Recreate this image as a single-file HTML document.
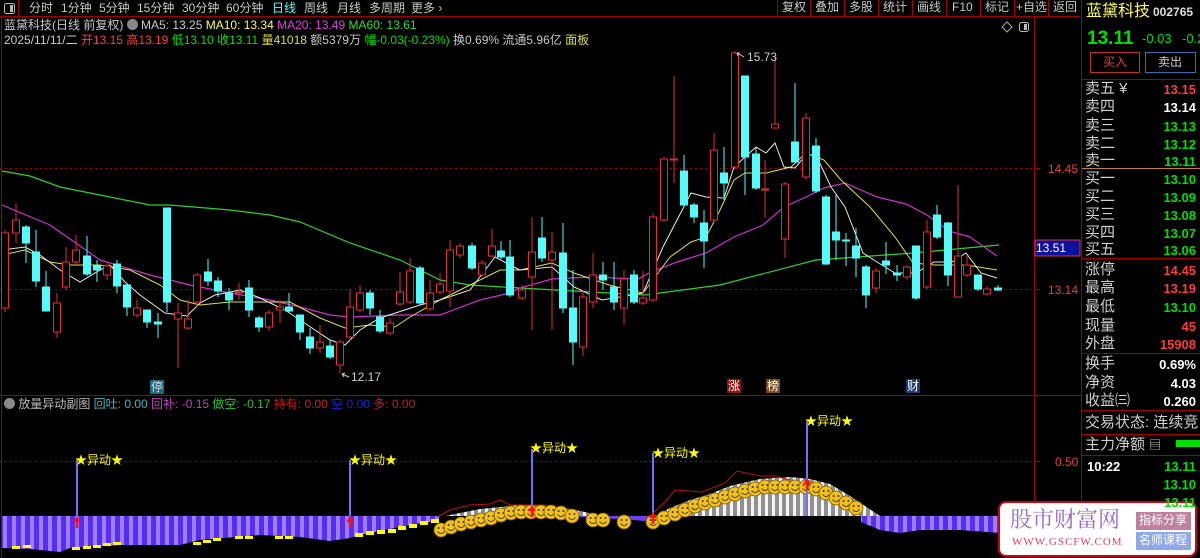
<!DOCTYPE html>
<html><head><meta charset="utf-8">
<style>
*{margin:0;padding:0;box-sizing:border-box}
body{width:1200px;height:558px;background:#000;overflow:hidden;position:relative;font-family:"Liberation Sans","Noto Sans CJK SC",sans-serif;color:#c8c8c8}
.a{position:absolute;white-space:nowrap;line-height:1}
.tb{font-size:12px;color:#c8c8c8;top:2px}
.bt{font-size:12px;color:#c8c8c8;top:1px}
.rp{font-size:15px;color:#d0d0d0}
.rv{font-size:13px;font-weight:bold;text-align:right;right:4px}
.g{color:#00e000}.r{color:#ff3c3c}.w{color:#fff}
</style></head><body>
<svg class="a" style="left:0;top:0" width="1200" height="558">
<defs>
<pattern id="pp" width="9" height="10" patternUnits="userSpaceOnUse"><rect width="9" height="10" fill="#5a2cf0"/><rect x="3" width="4" height="10" fill="#9a80ff"/></pattern>
<pattern id="wp" width="7" height="10" patternUnits="userSpaceOnUse"><rect width="7" height="10" fill="#909090"/><rect x="2" width="3" height="10" fill="#f4f4f4"/></pattern>
<g id="sm"><circle r="7" fill="#f2c21c" stroke="#7a5a00" stroke-width="0.8"/><circle cx="-2.4" cy="-2" r="1" fill="#402800"/><circle cx="2.4" cy="-2" r="1" fill="#402800"/><path d="M-3.5 1.5Q0 5.5 3.5 1.5" stroke="#402800" fill="none" stroke-width="0.9"/></g>
<g id="ar"><path d="M0 -6L-4 0H-1.3V6H1.3V0H4Z" fill="#ff1010"/></g>
</defs>
<!-- frame lines -->
<line x1="0" y1="16.5" x2="1080" y2="16.5" stroke="#a00000"/>
<line x1="1.5" y1="17" x2="1.5" y2="558" stroke="#a00000"/>
<line x1="1034.5" y1="17" x2="1034.5" y2="558" stroke="#a00000"/>
<line x1="1081.5" y1="0" x2="1081.5" y2="558" stroke="#a00000"/>
<line x1="0" y1="395.5" x2="1081" y2="395.5" stroke="#a00000"/>
<line x1="0" y1="168.5" x2="1034" y2="168.5" stroke="#a00000" stroke-dasharray="2 3"/>
<line x1="0" y1="289.5" x2="1034" y2="289.5" stroke="#a00000" stroke-dasharray="2 3"/>
<line x1="0" y1="461.5" x2="1034" y2="461.5" stroke="#a00000" stroke-dasharray="2 3"/>
<line x1="1034" y1="168.5" x2="1040" y2="168.5" stroke="#a00000"/>
<line x1="1034" y1="289.5" x2="1040" y2="289.5" stroke="#a00000"/>
<line x1="1034" y1="461.5" x2="1040" y2="461.5" stroke="#a00000"/>
<!-- toolbar separators -->
<g stroke="#a00000"><line x1="18.5" y1="0" x2="18.5" y2="16"/><line x1="777.5" y1="0" x2="777.5" y2="16"/><line x1="810.5" y1="0" x2="810.5" y2="16"/><line x1="844.5" y1="0" x2="844.5" y2="16"/><line x1="878.5" y1="0" x2="878.5" y2="16"/><line x1="912.5" y1="0" x2="912.5" y2="16"/><line x1="946.5" y1="0" x2="946.5" y2="16"/><line x1="980.5" y1="0" x2="980.5" y2="16"/><line x1="1014.5" y1="0" x2="1014.5" y2="16"/><line x1="1048.5" y1="0" x2="1048.5" y2="16"/></g>
<rect x="4.5" y="3.5" width="10" height="10" rx="2" fill="none" stroke="#bbb"/><rect x="10" y="5" width="3" height="7" fill="#bbb"/>
<path d="M1007 22l5 5-5 5-5-5z" fill="none" stroke="#aaa"/>
<rect x="1019.5" y="22.5" width="9" height="9" rx="2" fill="none" stroke="#bbb"/><rect x="1024" y="24" width="3" height="6" fill="#bbb"/>
<!-- MA lines -->
<polyline fill="none" stroke="#2ed02e" stroke-width="1.2" points="2,171 30,176 60,187 100,195 150,205 170,205 230,210 270,215 300,222 350,243 400,260 420,270 440,280 470,285 520,288 591,292 645,295 720,285 816,260 913,253 999,245"/>
<polyline fill="none" stroke="#d030d0" stroke-width="1.2" points="2,205 50,225 100,260 150,275 190,285 230,293 270,300 300,307 330,315 350,317 400,315 440,315 480,300 510,293 520,288 552,279 591,277 638,279 649,273 677,262 706,253 734,237 763,225 784,207 806,197 824,188 845,183 877,197 906,204 927,215 949,231 970,237 997,256"/>
<polyline fill="none" stroke="#e0e040" stroke-width="1" points="2,255 25,250 50,262 70,265 100,265 130,270 160,285 180,300 200,305 230,302 260,302 290,302 320,318 345,328 370,325 395,327 410,317 440,300 470,285 500,270 520,270 552,263 574,273 609,285 643,293 670,257 691,242 706,237 720,210 734,180 745,173 766,173 791,167 806,153 824,160 841,180 870,207 895,237 913,263 934,265 966,265 997,270"/>
<polyline fill="none" stroke="#e8e8e8" stroke-width="1" points="2,250 25,247 40,255 60,270 80,282 100,270 110,265 125,282 140,295 165,313 187,316 200,303 215,295 240,290 260,298 285,310 300,320 330,340 345,345 360,330 380,318 420,305 440,300 470,290 495,257 510,265 520,270 552,267 574,287 602,300 643,293 663,247 691,193 706,197 724,198 734,167 756,147 766,153 775,143 784,167 795,168 806,155 816,155 831,187 845,207 863,253 877,262 895,273 916,273 934,262 952,262 966,253 981,273 997,278"/>
<!-- candles -->
<g id="c" stroke-width="1">
<g stroke="#e03030" fill="#000">
<line x1="5" y1="230" x2="5" y2="312"/><rect x="1.5" y="233" width="7" height="75"/>
<line x1="16" y1="203" x2="16" y2="243"/><rect x="12.5" y="220" width="7" height="13"/>
<line x1="57" y1="293" x2="57" y2="338"/><rect x="53.5" y="303" width="7" height="29"/>
<line x1="66" y1="247" x2="66" y2="290"/><rect x="62.5" y="262" width="7" height="25"/>
<line x1="76" y1="235" x2="76" y2="265"/><rect x="72.5" y="250" width="7" height="12"/>
<line x1="107" y1="262" x2="107" y2="280"/><rect x="103.5" y="266" width="7" height="9"/>
<line x1="137" y1="300" x2="137" y2="318"/><rect x="133.5" y="308" width="7" height="7"/>
<line x1="178" y1="303" x2="178" y2="368"/><rect x="174.5" y="313" width="7" height="6"/>
<line x1="188" y1="300" x2="188" y2="330"/><rect x="184.5" y="319" width="7" height="9"/>
<line x1="197" y1="273" x2="197" y2="307"/><rect x="193.5" y="275" width="7" height="27"/>
<line x1="239" y1="283" x2="239" y2="300"/><rect x="235.5" y="292" width="7" height="1"/>
<line x1="269" y1="310" x2="269" y2="331"/><rect x="265.5" y="313" width="7" height="14"/>
<line x1="280" y1="300" x2="280" y2="323"/><rect x="276.5" y="307" width="7" height="3"/>
<line x1="320" y1="325" x2="320" y2="353"/><rect x="316.5" y="342" width="7" height="6"/>
<line x1="340" y1="340" x2="340" y2="373"/><rect x="336.5" y="342" width="7" height="23"/>
<line x1="350" y1="289" x2="350" y2="340"/><rect x="346.5" y="307" width="7" height="30"/>
<line x1="360" y1="285" x2="360" y2="312"/><rect x="356.5" y="293" width="7" height="17"/>
<line x1="390" y1="318" x2="390" y2="335"/><rect x="386.5" y="323" width="7" height="10"/>
<line x1="400" y1="272" x2="400" y2="306"/><rect x="396.5" y="292" width="7" height="12"/>
<line x1="410" y1="258" x2="410" y2="304"/><rect x="406.5" y="271" width="7" height="31"/>
<line x1="430" y1="280" x2="430" y2="311"/><rect x="426.5" y="293" width="7" height="16"/>
<line x1="440" y1="273" x2="440" y2="294"/><rect x="436.5" y="284" width="7" height="8"/>
<line x1="450" y1="240" x2="450" y2="307"/><rect x="446.5" y="250" width="7" height="41"/>
<line x1="460" y1="243" x2="460" y2="258"/><rect x="456.5" y="246" width="7" height="9"/>
<line x1="482" y1="260" x2="482" y2="277"/><rect x="478.5" y="263" width="7" height="12"/>
<line x1="492" y1="229" x2="492" y2="258"/><rect x="488.5" y="246" width="7" height="10"/>
<line x1="522" y1="285" x2="522" y2="300"/><rect x="518.5" y="290" width="7" height="8"/>
<line x1="532" y1="217" x2="532" y2="330"/><rect x="528.5" y="252" width="7" height="25"/>
<line x1="552" y1="232" x2="552" y2="330"/><rect x="548.5" y="252" width="7" height="8"/>
<line x1="583" y1="290" x2="583" y2="356"/><rect x="579.5" y="297" width="7" height="50"/>
<line x1="593" y1="253" x2="593" y2="308"/><rect x="589.5" y="275" width="7" height="27"/>
<line x1="624" y1="270" x2="624" y2="325"/><rect x="620.5" y="279" width="7" height="29"/>
<line x1="643" y1="271" x2="643" y2="305"/><rect x="639.5" y="298" width="7" height="5"/>
<line x1="653" y1="213" x2="653" y2="302"/><rect x="649.5" y="217" width="7" height="83"/>
<line x1="664" y1="157" x2="664" y2="222"/><rect x="660.5" y="159" width="7" height="61"/>
<line x1="674" y1="76" x2="674" y2="183"/><rect x="670.5" y="159" width="7" height="1"/>
<line x1="714" y1="133" x2="714" y2="222"/><rect x="710.5" y="150" width="7" height="70"/>
<line x1="735" y1="51" x2="735" y2="169"/><rect x="731.5" y="53" width="7" height="114"/>
<line x1="765" y1="160" x2="765" y2="218"/><rect x="761.5" y="189" width="7" height="1"/>
<line x1="775" y1="57" x2="775" y2="128"/><rect x="771.5" y="124" width="7" height="4"/>
<line x1="785" y1="182" x2="785" y2="258"/><rect x="781.5" y="184" width="7" height="55"/>
<line x1="806" y1="113" x2="806" y2="180"/><rect x="802.5" y="118" width="7" height="59"/>
<line x1="876" y1="268" x2="876" y2="293"/><rect x="872.5" y="271" width="7" height="17"/>
<line x1="907" y1="265" x2="907" y2="280"/><rect x="903.5" y="267" width="7" height="10"/>
<line x1="927" y1="220" x2="927" y2="289"/><rect x="923.5" y="232" width="7" height="55"/>
<line x1="958" y1="185" x2="958" y2="298"/><rect x="954.5" y="256" width="7" height="41"/>
<line x1="967" y1="256" x2="967" y2="277"/><rect x="963.5" y="265" width="7" height="10"/>
<line x1="987" y1="286" x2="987" y2="295"/><rect x="983.5" y="289" width="7" height="5"/>
</g>
<g stroke="#54fcfc" fill="#54fcfc">
<line x1="26" y1="225" x2="26" y2="263"/><rect x="22.5" y="227" width="7" height="16"/>
<line x1="36" y1="230" x2="36" y2="287"/><rect x="32.5" y="252" width="7" height="29"/>
<line x1="46" y1="271" x2="46" y2="311"/><rect x="42.5" y="287" width="7" height="24"/>
<line x1="87" y1="236" x2="87" y2="276"/><rect x="83.5" y="256" width="7" height="18"/>
<line x1="97" y1="260" x2="97" y2="282"/><rect x="93.5" y="266" width="7" height="4"/>
<line x1="117" y1="260" x2="117" y2="293"/><rect x="113.5" y="264" width="7" height="22"/>
<line x1="127" y1="283" x2="127" y2="316"/><rect x="123.5" y="285" width="7" height="22"/>
<line x1="147" y1="310" x2="147" y2="328"/><rect x="143.5" y="310" width="7" height="12"/>
<line x1="158" y1="313" x2="158" y2="338"/><rect x="154.5" y="322" width="7" height="2"/>
<line x1="167" y1="208" x2="167" y2="312"/><rect x="163.5" y="208" width="7" height="94"/>
<line x1="208" y1="259" x2="208" y2="286"/><rect x="204.5" y="272" width="7" height="9"/>
<line x1="218" y1="277" x2="218" y2="297"/><rect x="214.5" y="281" width="7" height="10"/>
<line x1="229" y1="288" x2="229" y2="310"/><rect x="225.5" y="293" width="7" height="7"/>
<line x1="249" y1="280" x2="249" y2="317"/><rect x="245.5" y="288" width="7" height="22"/>
<line x1="259" y1="316" x2="259" y2="332"/><rect x="255.5" y="318" width="7" height="9"/>
<line x1="289" y1="293" x2="289" y2="312"/><rect x="285.5" y="307" width="7" height="4"/>
<line x1="300" y1="315" x2="300" y2="340"/><rect x="296.5" y="315" width="7" height="17"/>
<line x1="310" y1="328" x2="310" y2="354"/><rect x="306.5" y="337" width="7" height="11"/>
<line x1="330" y1="340" x2="330" y2="359"/><rect x="326.5" y="346" width="7" height="11"/>
<line x1="370" y1="290" x2="370" y2="315"/><rect x="366.5" y="293" width="7" height="15"/>
<line x1="380" y1="310" x2="380" y2="333"/><rect x="376.5" y="317" width="7" height="14"/>
<line x1="420" y1="266" x2="420" y2="305"/><rect x="416.5" y="268" width="7" height="35"/>
<line x1="472" y1="243" x2="472" y2="270"/><rect x="468.5" y="246" width="7" height="22"/>
<line x1="501" y1="241" x2="501" y2="259"/><rect x="497.5" y="251" width="7" height="6"/>
<line x1="510" y1="240" x2="510" y2="297"/><rect x="506.5" y="257" width="7" height="38"/>
<line x1="542" y1="217" x2="542" y2="262"/><rect x="538.5" y="238" width="7" height="20"/>
<line x1="563" y1="223" x2="563" y2="313"/><rect x="559.5" y="253" width="7" height="55"/>
<line x1="573" y1="270" x2="573" y2="365"/><rect x="569.5" y="308" width="7" height="34"/>
<line x1="603" y1="262" x2="603" y2="290"/><rect x="599.5" y="275" width="7" height="5"/>
<line x1="614" y1="262" x2="614" y2="310"/><rect x="610.5" y="287" width="7" height="15"/>
<line x1="634" y1="270" x2="634" y2="304"/><rect x="630.5" y="275" width="7" height="27"/>
<line x1="684" y1="155" x2="684" y2="207"/><rect x="680.5" y="171" width="7" height="34"/>
<line x1="694" y1="203" x2="694" y2="223"/><rect x="690.5" y="205" width="7" height="12"/>
<line x1="704" y1="210" x2="704" y2="268"/><rect x="700.5" y="223" width="7" height="18"/>
<line x1="724" y1="147" x2="724" y2="200"/><rect x="720.5" y="173" width="7" height="10"/>
<line x1="745" y1="76" x2="745" y2="195"/><rect x="741.5" y="76" width="7" height="81"/>
<line x1="756" y1="147" x2="756" y2="190"/><rect x="752.5" y="154" width="7" height="34"/>
<line x1="795" y1="83" x2="795" y2="164"/><rect x="791.5" y="142" width="7" height="20"/>
<line x1="816" y1="138" x2="816" y2="193"/><rect x="812.5" y="146" width="7" height="45"/>
<line x1="826" y1="195" x2="826" y2="265"/><rect x="822.5" y="197" width="7" height="67"/>
<line x1="836" y1="195" x2="836" y2="260"/><rect x="832.5" y="232" width="7" height="8"/>
<line x1="846" y1="233" x2="846" y2="266"/><rect x="842.5" y="240" width="7" height="1"/>
<line x1="856" y1="228" x2="856" y2="277"/><rect x="852.5" y="246" width="7" height="12"/>
<line x1="866" y1="265" x2="866" y2="308"/><rect x="862.5" y="267" width="7" height="28"/>
<line x1="886" y1="242" x2="886" y2="274"/><rect x="882.5" y="261" width="7" height="4"/>
<line x1="897" y1="265" x2="897" y2="281"/><rect x="893.5" y="273" width="7" height="2"/>
<line x1="916" y1="246" x2="916" y2="300"/><rect x="912.5" y="246" width="7" height="52"/>
<line x1="937" y1="205" x2="937" y2="239"/><rect x="933.5" y="215" width="7" height="22"/>
<line x1="948" y1="222" x2="948" y2="286"/><rect x="944.5" y="223" width="7" height="52"/>
<line x1="978" y1="275" x2="978" y2="291"/><rect x="974.5" y="275" width="7" height="14"/>
<line x1="998" y1="285" x2="998" y2="291"/><rect x="994.5" y="288" width="7" height="2"/>
</g>
</g>
<!-- markers -->
<path d="M744 57l-7-4m0 0l3 0m-3 0l1 3" stroke="#ccc" fill="none"/>
<path d="M349 377l-7-3m0 0l3-1m-3 1l2 3" stroke="#ccc" fill="none"/>
<rect x="150" y="380" width="14" height="14" fill="#1c6a80"/>
<rect x="727" y="379" width="14" height="14" fill="#8a1414"/>
<rect x="766" y="379" width="14" height="14" fill="#7a4a14"/>
<rect x="906" y="379" width="14" height="14" fill="#1c3c70"/>
<rect x="1035" y="240" width="45" height="16" fill="#1010a0" stroke="#e03030"/>
<!-- bottom panel -->
<polygon fill="url(#pp)" points="2,516 440,516 438,520 430,522 415,524 400,527 375,532 360,535 350,538 330,541 300,537 260,535 200,540 180,545 120,545 70,548 60,552 30,549 2,548"/>
<polygon fill="url(#pp)" points="861,516 1034,516 1034,533 1000,533 960,530 920,530 900,533 880,530 861,522"/>
<polygon fill="#6a40f0" points="575,516 650,516 645,521 620,519 590,518"/>
<polygon fill="url(#wp)" points="445,516 480,509 520,505 560,507 585,512 600,516"/>
<polygon fill="url(#wp)" points="655,516 670,508 690,500 710,494 730,486 760,479 790,477 810,479 830,484 850,496 868,508 880,516"/>
<g fill="#ffff00"><rect x="12" y="546" width="8" height="3"/><rect x="23" y="545" width="8" height="3"/><rect x="72" y="547" width="8" height="3"/><rect x="83" y="546" width="8" height="3"/><rect x="93" y="545" width="8" height="3"/><rect x="103" y="543" width="8" height="3"/><rect x="113" y="542" width="8" height="3"/><rect x="193" y="542" width="8" height="3"/><rect x="203" y="540" width="8" height="3"/><rect x="213" y="538" width="8" height="3"/><rect x="235" y="536" width="8" height="3"/><rect x="245" y="536" width="8" height="3"/><rect x="275" y="536" width="8" height="3"/><rect x="285" y="536" width="8" height="3"/><rect x="355" y="533" width="8" height="4"/><rect x="366" y="531" width="8" height="4"/><rect x="377" y="530" width="8" height="4"/><rect x="388" y="529" width="8" height="4"/><rect x="398" y="526" width="8" height="4"/><rect x="409" y="524" width="8" height="4"/><rect x="420" y="521" width="8" height="4"/><rect x="431" y="519" width="8" height="4"/></g>
<polyline fill="none" stroke="#c01010" points="437,517 450,510 470,505 490,504 500,500 510,505 545,505 560,508"/>
<polyline fill="none" stroke="#c01010" points="653,513 665,502 675,490 702,492 725,483 737,471 760,476 775,476 790,480"/>
<g>
<use href="#sm" x="441" y="530"/><use href="#sm" x="451" y="527"/><use href="#sm" x="461" y="524"/><use href="#sm" x="471" y="522"/><use href="#sm" x="481" y="520"/><use href="#sm" x="491" y="518"/><use href="#sm" x="501" y="515"/><use href="#sm" x="511" y="513"/><use href="#sm" x="521" y="512"/><use href="#sm" x="531" y="512"/><use href="#sm" x="541" y="512"/><use href="#sm" x="551" y="512"/><use href="#sm" x="561" y="513"/><use href="#sm" x="572" y="516"/>
<use href="#sm" x="593" y="520"/><use href="#sm" x="603" y="520"/><use href="#sm" x="624" y="522"/>
<use href="#sm" x="653" y="522"/><use href="#sm" x="664" y="518"/><use href="#sm" x="675" y="514"/><use href="#sm" x="685" y="510"/><use href="#sm" x="695" y="506"/><use href="#sm" x="705" y="503"/><use href="#sm" x="715" y="500"/><use href="#sm" x="725" y="497"/><use href="#sm" x="735" y="494"/><use href="#sm" x="745" y="491"/><use href="#sm" x="755" y="489"/><use href="#sm" x="765" y="487"/><use href="#sm" x="775" y="487"/><use href="#sm" x="785" y="487"/><use href="#sm" x="795" y="487"/><use href="#sm" x="806" y="487"/><use href="#sm" x="816" y="489"/><use href="#sm" x="826" y="493"/><use href="#sm" x="836" y="498"/><use href="#sm" x="846" y="503"/><use href="#sm" x="856" y="508"/>
</g>
<g stroke="#7070ff" stroke-width="2"><line x1="77" y1="460" x2="77" y2="516"/><line x1="350" y1="460" x2="350" y2="516"/><line x1="532" y1="449" x2="532" y2="516"/><line x1="653" y1="453" x2="653" y2="516"/><line x1="807" y1="421" x2="807" y2="516"/></g>
<use href="#ar" x="77" y="522"/><use href="#ar" x="350" y="522"/><use href="#ar" x="532" y="511"/><use href="#ar" x="653" y="518"/><use href="#ar" x="807" y="484"/>
<!-- right panel separators -->
<g stroke="#a00000"><line x1="1082" y1="79.5" x2="1200" y2="79.5"/><line x1="1082" y1="168.5" x2="1200" y2="168.5" stroke="#c08040"/><line x1="1082" y1="258.5" x2="1200" y2="258.5"/><line x1="1082" y1="353.5" x2="1200" y2="353.5"/><line x1="1082" y1="410.5" x2="1200" y2="410.5"/><line x1="1082" y1="434.5" x2="1200" y2="434.5"/><line x1="1082" y1="455.5" x2="1200" y2="455.5"/></g>
<rect x="1090.5" y="52.5" width="49" height="20" fill="none" stroke="#c03030"/>
<rect x="1145.5" y="52.5" width="50" height="20" fill="none" stroke="#3070b0"/>
<rect x="1176" y="440" width="24" height="7" fill="#00e000"/>
<!-- logo -->
<rect x="999" y="502" width="197" height="54" rx="7" fill="#fff" stroke="#d00010" stroke-width="2"/>
<rect x="1136" y="512" width="55" height="18" fill="#c080a0"/>
<rect x="1136" y="532" width="55" height="18" fill="#8fa8e8"/>
</svg>

<!-- toolbar -->
<div class="a tb" style="left:29px">分时</div>
<div class="a tb" style="left:61px">1分钟</div>
<div class="a tb" style="left:99px">5分钟</div>
<div class="a tb" style="left:137px">15分钟</div>
<div class="a tb" style="left:182px">30分钟</div>
<div class="a tb" style="left:226px">60分钟</div>
<div class="a tb" style="left:272px;color:#5ff">日线</div>
<div class="a tb" style="left:304px">周线</div>
<div class="a tb" style="left:337px">月线</div>
<div class="a tb" style="left:369px">多周期</div>
<div class="a tb" style="left:411px">更多 ›</div>
<div class="a bt" style="left:782px">复权</div>
<div class="a bt" style="left:815px">叠加</div>
<div class="a bt" style="left:849px">多股</div>
<div class="a bt" style="left:883px">统计</div>
<div class="a bt" style="left:917px">画线</div>
<div class="a bt" style="left:952px">F10</div>
<div class="a bt" style="left:985px">标记</div>
<div class="a bt" style="left:1016px">+自选</div>
<div class="a bt" style="left:1053px">返回</div>
<!-- chart info -->
<div class="a" style="left:4px;top:19px;font-size:12px;color:#c8c8c8">蓝黛科技(日线 前复权) <span style="display:inline-block;width:11px;height:11px;border-radius:6px;background:#888;vertical-align:-1px"></span> MA5: 13.25 <span style="color:#ff4">MA10: 13.34</span> <span style="color:#e040e0">MA20: 13.49</span> <span style="color:#3d3">MA60: 13.61</span></div>
<div class="a" style="left:4px;top:34px;font-size:12px;color:#c8c8c8">2025/11/11/二 <span class="r">开13.15</span> <span class="r">高13.19</span> <span class="g">低13.10</span> <span class="g">收13.11</span> <span style="color:#dd4">量41018</span> 额5379万 <span class="g">幅-0.03(-0.23%)</span> 换0.69% 流通5.96亿 <span style="color:#dd4">面板</span></div>
<div class="a" style="left:747px;top:51px;font-size:12px;color:#ccc">15.73</div>
<div class="a" style="left:351px;top:371px;font-size:12px;color:#ccc">12.17</div>
<div class="a" style="left:151px;top:381px;font-size:12px;color:#ddd">停</div>
<div class="a" style="left:728px;top:380px;font-size:12px;color:#fff">涨</div>
<div class="a" style="left:767px;top:380px;font-size:12px;color:#fff">榜</div>
<div class="a" style="left:907px;top:380px;font-size:12px;color:#fff">财</div>
<div class="a" style="left:1048px;top:163px;font-size:12px;color:#e04040">14.45</div>
<div class="a" style="left:1036px;top:242px;font-size:12px;color:#fff">13.51</div>
<div class="a" style="left:1048px;top:284px;font-size:12px;color:#e04040">13.14</div>
<div class="a" style="left:1055px;top:456px;font-size:12px;color:#e04040">0.50</div>
<!-- bottom header -->
<div class="a" style="left:4px;top:398px;font-size:12px;color:#bbb"><span style="display:inline-block;width:11px;height:11px;border-radius:6px;background:#888;vertical-align:-1px"></span> 放量异动副图 <span style="color:#3cb8b8">回吐: 0.00</span> <span style="color:#c040c0">回补: -0.15</span> <span style="color:#30c030">做空: -0.17</span> <span style="color:#c02020">持有: 0.00</span> <span style="color:#2020e0">空 0.00</span> <span style="color:#c02020">多: 0.00</span></div>
<!-- annotations -->
<div class="a" style="left:75px;top:454px;font-size:12px;color:#ff0">★异动★</div>
<div class="a" style="left:349px;top:454px;font-size:12px;color:#ff0">★异动★</div>
<div class="a" style="left:530px;top:442px;font-size:12px;color:#ff0">★异动★</div>
<div class="a" style="left:652px;top:447px;font-size:12px;color:#ff0">★异动★</div>
<div class="a" style="left:805px;top:415px;font-size:12px;color:#ff0">★异动★</div>
<!-- right panel -->
<div class="a" style="left:1086px;top:4px;font-size:16px;color:#ffff60">蓝黛科技</div>
<div class="a" style="left:1153px;top:6px;font-size:12px;color:#ddd;font-weight:bold">002765</div>
<div class="a g" style="left:1087px;top:29px;font-size:19px;font-weight:bold">13.11</div>
<div class="a g" style="left:1142px;top:32px;font-size:13px">-0.03</div>
<div class="a g" style="left:1182px;top:32px;font-size:13px">-0.2</div>
<div class="a" style="left:1103px;top:56px;font-size:12px;color:#e04040">买入</div>
<div class="a" style="left:1158px;top:56px;font-size:12px;color:#ccc">卖出</div>
<div class="a rp" style="left:1085px;top:81px">卖五 ¥</div><div class="a rv r" style="top:83px">13.15</div>
<div class="a rp" style="left:1085px;top:99px">卖四</div><div class="a rv w" style="top:101px">13.14</div>
<div class="a rp" style="left:1085px;top:118px">卖三</div><div class="a rv g" style="top:120px">13.13</div>
<div class="a rp" style="left:1085px;top:136px">卖二</div><div class="a rv g" style="top:138px">13.12</div>
<div class="a rp" style="left:1085px;top:153px">卖一</div><div class="a rv g" style="top:155px">13.11</div>
<div class="a rp" style="left:1085px;top:171px">买一</div><div class="a rv g" style="top:173px">13.10</div>
<div class="a rp" style="left:1085px;top:189px">买二</div><div class="a rv g" style="top:191px">13.09</div>
<div class="a rp" style="left:1085px;top:207px">买三</div><div class="a rv g" style="top:209px">13.08</div>
<div class="a rp" style="left:1085px;top:225px">买四</div><div class="a rv g" style="top:227px">13.07</div>
<div class="a rp" style="left:1085px;top:242px">买五</div><div class="a rv g" style="top:244px">13.06</div>
<div class="a rp" style="left:1085px;top:262px">涨停</div><div class="a rv r" style="top:264px">14.45</div>
<div class="a rp" style="left:1085px;top:280px">最高</div><div class="a rv r" style="top:282px">13.19</div>
<div class="a rp" style="left:1085px;top:299px">最低</div><div class="a rv g" style="top:301px">13.10</div>
<div class="a rp" style="left:1085px;top:318px">现量</div><div class="a rv r" style="top:320px">45</div>
<div class="a rp" style="left:1085px;top:336px">外盘</div><div class="a rv r" style="top:338px">15908</div>
<div class="a rp" style="left:1085px;top:356px">换手</div><div class="a rv w" style="top:358px">0.69%</div>
<div class="a rp" style="left:1085px;top:375px">净资</div><div class="a rv w" style="top:377px">4.03</div>
<div class="a rp" style="left:1085px;top:393px">收益㈢</div><div class="a rv w" style="top:395px">0.260</div>
<div class="a rp" style="left:1085px;top:415px">交易状态: 连续竞</div>
<div class="a rp" style="left:1085px;top:437px">主力净额 <span style="font-size:12px">▤</span></div>
<div class="a rv w" style="left:1087px;right:auto;top:460px">10:22</div>
<div class="a rv g" style="top:460px">13.11</div>
<div class="a rv g" style="top:478px">13.10</div>
<div class="a rv g" style="top:496px">13.11</div>
<!-- logo text -->
<div class="a" style="left:1010px;top:508px;font-size:22px;color:#9a6ac0;font-family:'Noto Serif CJK SC',serif">股市财富网</div>
<div class="a" style="left:1012px;top:537px;font-size:11px;color:#e04060;font-family:'Liberation Serif',serif;letter-spacing:1px">WWW.GSCFW.COM</div>
<div class="a" style="left:1139px;top:514px;font-size:12px;color:#fff">指标分享</div>
<div class="a" style="left:1139px;top:534px;font-size:12px;color:#fff">名师课程</div>
</body></html>
